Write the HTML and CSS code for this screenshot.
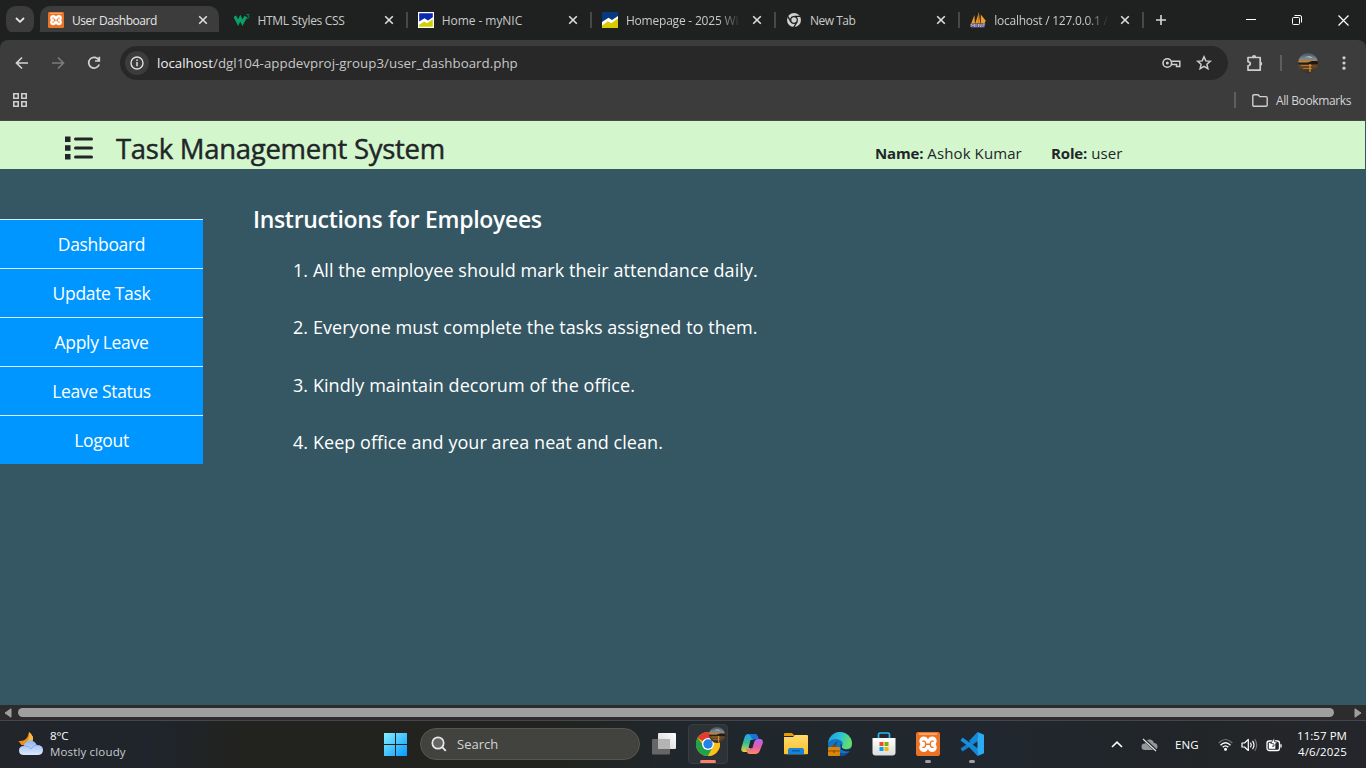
FILE: index.html
```html
<!DOCTYPE html>
<html lang="en">
<head>
<meta charset="utf-8">
<title>User Dashboard</title>
<link rel="stylesheet" href="styles.css">
</head>
<body>
<svg class="defs" width="0" height="0" aria-hidden="true">
  <defs>
    <symbol id="close" viewBox="0 0 10 10"><path d="M1.200 1.200l7.600 7.600M8.800 1.200L1.200 8.800" fill="none" stroke="currentColor" stroke-width="1.600"/></symbol>
    <symbol id="xampp" viewBox="0 0 24 24">
      <rect width="24" height="24" rx="2" fill="#ea7325"/>
      <path d="M3 2h18" stroke="#f9b98a" stroke-width="1.400"/>
      <g fill="#fff"><circle cx="7.800" cy="9" r="4.500"/><circle cx="16.200" cy="9" r="4.500"/><circle cx="7.800" cy="15.500" r="4.500"/><circle cx="16.200" cy="15.500" r="4.500"/><path d="M6 9.500h12v5.500H6z"/></g>
      <path d="M6.800 9.200H8q1.600 0 1.600 3.050T8 15.300H6.800M17.200 9.200H16q-1.600 0-1.600 3.050T16 15.300h1.200M9.800 12.250h4.400" fill="none" stroke="#ea7325" stroke-width="1.300" stroke-linecap="round"/>
    </symbol>
    <linearGradient id="sunset" x1="0" y1="0" x2="0" y2="1">
      <stop offset="0" stop-color="#3f5468"/><stop offset=".3" stop-color="#81868a"/><stop offset=".43" stop-color="#ac8241"/>
      <stop offset=".52" stop-color="#211c19"/><stop offset=".62" stop-color="#6e4923"/><stop offset="1" stop-color="#31302e"/>
    </linearGradient>
    <symbol id="avatar" viewBox="0 0 20 20">
      <circle cx="10" cy="10" r="10" fill="url(#sunset)"/>
      <path d="M6 4.500q3-2 6-1.500l3 1.500q-3 1-4 .3t-5-.3z" fill="#a2a9ac"/>
      <path d="M1 8.500h11" stroke="#c48431" stroke-width="1"/>
      <path d="M10 9.500l4-1.500h5.800v3H10z" fill="#1c1917"/>
      <path d="M3 12.500h11M5 15.500h9" stroke="#b87b30" stroke-width=".9"/>
      <path d="M12 11v8" stroke="#e0963a" stroke-width="1.200"/>
    </symbol>
    <linearGradient id="win" x1="0" y1="0" x2="1" y2="1"><stop offset="0" stop-color="#84f0ff"/><stop offset="1" stop-color="#0798ff"/></linearGradient>
    <linearGradient id="viewFront" x1="0" y1="1" x2="1" y2="0"><stop offset="0" stop-color="#d0d0d0"/><stop offset="1" stop-color="#fff"/></linearGradient>
    <linearGradient id="copA" x1="0" y1="0" x2="0" y2="1"><stop offset="0" stop-color="#20a4f5"/><stop offset=".5" stop-color="#38bc93"/><stop offset="1" stop-color="#e7d33c"/></linearGradient>
    <linearGradient id="copB" x1="0" y1="0" x2="0" y2="1"><stop offset="0" stop-color="#ad6bf0"/><stop offset=".5" stop-color="#e35bb0"/><stop offset="1" stop-color="#ff8a5c"/></linearGradient>
    <linearGradient id="fold" x1="0" y1="0" x2="0" y2="1"><stop offset="0" stop-color="#ffdc6a"/><stop offset="1" stop-color="#fbbf2f"/></linearGradient>
    <linearGradient id="edge" x1="0" y1="0" x2="1" y2=".3"><stop offset="0" stop-color="#1c9be0"/><stop offset=".55" stop-color="#2dc3d4"/><stop offset="1" stop-color="#65df66"/></linearGradient>
    <linearGradient id="cloud" x1="0" y1="0" x2="0" y2="1"><stop offset="0" stop-color="#8eb4f5"/><stop offset="1" stop-color="#dce8fc"/></linearGradient>
    <linearGradient id="bag" x1="0" y1="0" x2="0" y2="1"><stop offset="0" stop-color="#fff"/><stop offset="1" stop-color="#dcdcdc"/></linearGradient>
  </defs>
</svg>

<div class="tabstrip">
  <button class="tab-search"><svg width="10" height="6" viewBox="0 0 10 6"><path d="M1 1l4 3.800L9 1" fill="none" stroke="#e6e6e6" stroke-width="1.800"/></svg></button>
  <div class="tab tab-active">
    <svg class="favicon" viewBox="0 0 24 24"><use href="#xampp"/></svg>
    <span class="tab-title t-user">User Dashboard</span>
    <svg class="tab-close"><use href="#close"/></svg>
  </div>
  <div class="tab">
    <svg class="favicon" viewBox="0 0 16 16"><path d="M.8 4.200l3.300 6.500 2.200-4.500 2.200 4.500 3.300-6.200" fill="none" stroke="#08a067" stroke-width="3"/><path d="M12.500 2.500H15l-1.300 1.600q1.500 0 1.400 1.200T12.600 6.500" fill="none" stroke="#08805a" stroke-width="1"/></svg>
    <span class="tab-title t-html">HTML Styles CSS</span>
    <svg class="tab-close"><use href="#close"/></svg>
  </div>
  <div class="tab">
    <svg class="favicon" viewBox="0 0 16 16"><path d="M0 0h16v16H0z" fill="#fff"/><path d="M1.200 1.200h13.600v4L10 8.500 6.500 6.300 1.200 9.500z" fill="#0829b3"/><path d="M1.200 14.800v-2l5-3.300L9 11.300l5.800-4v7.500z" fill="#d0d000"/></svg>
    <span class="tab-title t-nic">Home - myNIC</span>
    <svg class="tab-close"><use href="#close"/></svg>
  </div>
  <div class="tab">
    <svg class="favicon" viewBox="0 0 16 16"><path d="M0 0h16v16H0z" fill="#fff"/><path d="M0 0h16v4L10 8 6.500 5.800 0 10z" fill="#07397f"/><path d="M0 16v-2.500l6-4.200 3.200 2L16 6.500V16z" fill="#dacb00"/></svg>
    <span class="tab-title t-homepage">Homepage - 2025 Wi</span>
    <svg class="tab-close"><use href="#close"/></svg>
  </div>
  <div class="tab">
    <svg class="favicon" viewBox="0 0 16 16"><circle cx="8" cy="8" r="7" fill="#d0d1d0"/><circle cx="8" cy="8" r="3.300" fill="#d0d1d0" stroke="#1f2120" stroke-width="1.300"/><path d="M8 4.400h6.700M4.900 9.800L1.600 4.200M11 9.900l-3.300 5.500" stroke="#1f2120" stroke-width="1.300"/></svg>
    <span class="tab-title t-new">New Tab</span>
    <svg class="tab-close"><use href="#close"/></svg>
  </div>
  <div class="tab">
    <svg class="favicon" viewBox="0 0 16 16"><path d="M1 12l3.400-9 .6 8.500zM5.200 11.500L8.800.5l1.500 11zM10.800 11.500V2.500l5 6.300-1.300 2.700z" fill="#f39a26"/><path d="M8.800.5L8.200 11.500" stroke="#9b5a18" stroke-width=".6"/><path d="M.5 11.500h15L14.500 15.500H1z" fill="#62628b"/><path d="M1 15v-3l2 2 1.500-2v3M6 12v3M8.500 15v-3l2.500 3v-3M13 15v-3h2" fill="none" stroke="#c3c3d8" stroke-width=".7"/></svg>
    <span class="tab-title t-local">localhost / 127.0.0.1 /</span>
    <svg class="tab-close"><use href="#close"/></svg>
  </div>
  <svg class="new-tab" width="12" height="12" viewBox="0 0 12 12"><path d="M6 1v10M1 6h10" stroke="#d6d6d6" stroke-width="1.600"/></svg>
  <div class="window-controls">
    <svg width="10" height="10" viewBox="0 0 10 10"><path d="M0 4.500h10" stroke="#fff"/></svg>
    <svg width="10" height="10" viewBox="0 0 10 10"><rect x=".5" y="2.500" width="7" height="7" rx="1" fill="none" stroke="#fff"/><path d="M2.500.5H8q1.500 0 1.500 1.500v5.500" fill="none" stroke="#fff"/></svg>
    <svg width="11" height="11" viewBox="0 0 11 11"><path d="M.5.5l10 10M10.500.5l-10 10" stroke="#fff" stroke-width="1.200"/></svg>
  </div>
</div>

<div class="browser-chrome">
  <div class="toolbar">
    <svg class="nav" viewBox="0 0 16 16"><path d="M14 8H3M8 2.500L2.500 8 8 13.500" fill="none" stroke="#d3d3d3" stroke-width="1.700"/></svg>
    <svg class="nav" viewBox="0 0 16 16"><path d="M2 8h11M8 2.500L13.500 8 8 13.500" fill="none" stroke="#7b7b7b" stroke-width="1.700"/></svg>
    <svg class="nav" viewBox="0 0 16 16"><path d="M12.800 5A5.400 5.400 0 1 0 13.200 9.500M13.300 1.800V6H9" fill="none" stroke="#d3d3d3" stroke-width="1.700"/></svg>
    <div class="omnibox">
      <span class="site-info"><svg width="14" height="14" viewBox="0 0 14 14"><circle cx="7" cy="7" r="6" fill="none" stroke="#dedede" stroke-width="1.400"/><path d="M7 6v4.200M7 3.600v1.500" stroke="#dedede" stroke-width="1.500"/></svg></span>
      <span class="url"><span class="host">localhost</span>/dgl104-appdevproj-group3/user_dashboard.php</span>
      <svg class="key" width="19" height="12" viewBox="0 0 19 12"><circle cx="5.300" cy="6" r="4.300" fill="none" stroke="#cecece" stroke-width="1.600"/><circle cx="5.300" cy="6" r="1.500" fill="#cecece"/><path d="M9.500 4.200h8.300v5.300h-3.300V7.600H9.500" fill="none" stroke="#cecece" stroke-width="1.500"/></svg>
      <svg width="16" height="16" viewBox="0 0 16 16"><path d="M8 1.800l1.800 4.100 4.500.4-3.400 3 1 4.400L8 11.300l-3.900 2.400 1-4.400-3.400-3 4.500-.4z" fill="none" stroke="#cecece" stroke-width="1.500"/></svg>
    </div>
    <svg class="ext" width="18" height="18" viewBox="0 0 18 18"><path d="M2 3.500h12.200v12.700H2v-4.400q2.300-.4 2.300-2T2 7.700z" fill="none" stroke="#cecece" stroke-width="1.700" stroke-linejoin="round"/><path d="M6 3a2.100 2.100 0 0 1 4.200 0zM14.500 7.500a2.200 2.200 0 0 1 0 4.300z" fill="#cecece"/></svg>
    <span class="bar"></span>
    <svg class="profile" width="20" height="20" viewBox="0 0 20 20"><use href="#avatar"/></svg>
    <svg class="kebab" width="4" height="14" viewBox="0 0 4 14"><g fill="#cecece"><circle cx="2" cy="1.800" r="1.600"/><circle cx="2" cy="7" r="1.600"/><circle cx="2" cy="12.200" r="1.600"/></g></svg>
  </div>
  <div class="bookmarks">
    <svg width="14" height="14" viewBox="0 0 14 14"><path d="M.8.8h4.400v4.400H.8zM8.800.8h4.400v4.400H8.800zM.8 8.800h4.400v4.400H.8zM8.800 8.800h4.400v4.400H8.800z" fill="none" stroke="#cecece" stroke-width="1.600"/></svg>
    <span class="bar bar-right"></span>
    <svg class="folder" width="16" height="13" viewBox="0 0 16 13"><path d="M.8 2q0-1.200 1.200-1.200h4L7.800 2.600H14q1.200 0 1.200 1.200v7.200q0 1.200-1.200 1.200H2Q.8 12.200.8 11z" fill="none" stroke="#cecece" stroke-width="1.400"/></svg>
    <span class="all-bookmarks">All Bookmarks</span>
  </div>
</div>

<header class="app-header">
  <svg class="menu-icon" width="28" height="24" viewBox="0 0 28 24"><path d="M0 .5h5.500V6H0zM0 9.300h5.500v5.500H0zM0 18h5.500v5.500H0z" fill="#212529"/><path d="M10.500 3h16M10.500 12h16M10.500 21h16" stroke="#212529" stroke-width="3" stroke-linecap="round"/></svg>
  <h3 class="brand">Task Management System</h3>
  <span class="who who-name"><b>Name:</b> Ashok Kumar</span>
  <span class="who who-role"><b>Role:</b> user</span>
</header>
<main class="app-body">
  <nav class="sidebar">
    <a>Dashboard</a><a>Update Task</a><a>Apply Leave</a><a>Leave Status</a><a>Logout</a>
  </nav>
  <section class="instructions">
    <h4>Instructions for Employees</h4>
    <ol>
      <li>1. All the employee should mark their attendance daily.</li>
      <li>2. Everyone must complete the tasks assigned to them.</li>
      <li>3. Kindly maintain decorum of the office.</li>
      <li>4. Keep office and your area neat and clean.</li>
    </ol>
  </section>
</main>
<div class="scrollbar">
  <svg width="8" height="10" viewBox="0 0 8 10"><path d="M7 .8v8.400L1 5z" fill="#9f9f9f" stroke="#9f9f9f" stroke-linejoin="round"/></svg>
  <span class="thumb"></span>
  <svg width="8" height="10" viewBox="0 0 8 10"><path d="M1 .8v8.400L7 5z" fill="#9f9f9f" stroke="#9f9f9f" stroke-linejoin="round"/></svg>
</div>

<footer class="taskbar">
  <div class="weather">
    <svg width="26" height="26" viewBox="0 0 26 26"><path d="M11 1q5.500 4.500 3.500 9l-4 5-7-1-3-4q5 .5 7.500-2T11 1z" fill="#f08e1a"/><path d="M11 1q5.500 4.500 3.500 9L9 11q3-4 2-10z" fill="#f8bc3f"/><path d="M6 24q-5 0-5-4.500T6 15q1-5.500 6-5.500 5 0 6.500 4.500 6.500 0 6.500 5T19.500 24z" fill="url(#cloud)"/><path d="M7 15q4 0 6 3 2-4 6-4" fill="none" stroke="#7fa5e8" stroke-width=".8"/></svg>
    <div class="weather-text"><span class="temp">8°C</span><span class="sky">Mostly cloudy</span></div>
  </div>
  <svg class="start" width="23" height="23" viewBox="0 0 23 23"><path d="M0 0h11v11H0zM12 0h11v11H12zM0 12h11v11H0zM12 12h11v11H12z" fill="url(#win)"/></svg>
  <div class="search">
    <svg width="16" height="16" viewBox="0 0 16 16"><circle cx="7" cy="7" r="5.700" fill="#666" stroke="#e8e8e8" stroke-width="1.700"/><path d="M11.200 11.200l3.600 3.600" stroke="#e8e8e8" stroke-width="1.900"/></svg>
    <span>Search</span>
  </div>
  <div class="apps">
    <div class="app"><svg width="24" height="24" viewBox="0 0 24 24"><rect x="6" y="1" width="18" height="16" rx="1" fill="url(#viewFront)"/><rect y="7" width="18" height="15.500" rx="1" fill="#666"/><path d="M6 7h12v10H6z" fill="#b4b4b4"/></svg></div>
    <div class="app app-current">
      <svg width="24" height="24" viewBox="0 0 24 24"><circle cx="12" cy="12" r="12" fill="#fbc116"/><path d="M12 12L1.600 6A12 12 0 0 1 22.400 6z" fill="#e33b2e"/><path d="M12 12H6.500L1.600 6A12 12 0 0 0 12 24l5-9z" fill="#21a24a"/><path d="M12 6h10.400A12 12 0 0 1 12 24l5-9z" fill="#fbc116"/><circle cx="12" cy="12" r="6" fill="#fff"/><circle cx="12" cy="12" r="4.700" fill="#2383ea"/></svg>
      <svg class="badge" width="16" height="16" viewBox="0 0 20 20"><use href="#avatar"/></svg>
      <i class="run run-current"></i>
    </div>
    <div class="app"><svg width="24" height="24" viewBox="0 0 24 24"><path d="M8 2h7q2 0 2.800 2.500L18.500 7H15q-2 0-2.700 2.300L10 17.500Q9 20 6.500 20H4.200Q.5 20 1.500 15.500l3-10Q5.500 2 8 2z" fill="url(#copA)"/><path d="M8 2h7q2 0 2.800 2.500L18.500 7H15L12 8q-1-5-4-6z" fill="#1873df"/><path d="M16 22H9.500q-2 0-2.800-2.500L6 17h3.500q2 0 2.700-2.300l2.300-5.500Q15.500 7 18 7h2q3.700 0 2.700 4.500l-3 7.500Q18.500 22 16 22z" fill="url(#copB)"/><path d="M10.500 8h4L12.500 16h-4z" fill="#20272e"/></svg></div>
    <div class="app"><svg width="24" height="24" viewBox="0 0 24 24"><path d="M0 2q0-1 1-1h7l3 3H0z" fill="#e29b0d"/><path d="M0 5h9l2-2h12q1 0 1 1v17.500q0 .8-1 .8H1q-1 0-1-1z" fill="url(#fold)"/><path d="M4 22.300V18q0-2 2-2h12q2 0 2 2v4.300z" fill="#1685d8"/><path d="M8 18.800h8" stroke="#075da6" stroke-width="1.400"/></svg></div>
    <div class="app"><svg width="24" height="24" viewBox="0 0 24 24"><circle cx="12" cy="12" r="12" fill="#1176c9"/><path d="M.2 10A12 12 0 0 1 24 11q0 6-6 6-5 0-4-3 2-4-2-6Q6 5 .2 10z" fill="url(#edge)"/><path d="M10 9q-4 5 0 10 4 4 11 1-5 6-12 3.500Q5 21 5 16t5-7z" fill="#164b94"/><path d="M12.500 11.500q2 1.500 1 4 3.500 4 10.500.5v2.500q-6 2.500-11-1z" fill="#20272e"/><path d="M4.500 15v-1.200h3V15" fill="none" stroke="#8e4e08" stroke-width="1.400"/><rect y="15" width="12" height="9" rx="1" fill="#d8870b"/><path d="M0 19h12M6 18v3" stroke="#8e4e08" stroke-width="1.200"/></svg></div>
    <div class="app"><svg width="24" height="24" viewBox="0 0 24 24"><path d="M6.500 6V2.500q0-1.500 1.500-1.500h8q1.500 0 1.500 1.500V6" fill="none" stroke="#31b2f3" stroke-width="1.700"/><path d="M.5 6h23v14.500q0 3-3 3h-17q-3 0-3-3z" fill="url(#bag)"/><path d="M7.500 10h4v4h-4z" fill="#ef4c24"/><path d="M12.500 10h4v4h-4z" fill="#77b300"/><path d="M7.500 15h4v4h-4z" fill="#0a9de9"/><path d="M12.500 15h4v4h-4z" fill="#f6b600"/></svg></div>
    <div class="app"><svg width="24" height="24" viewBox="0 0 24 24"><use href="#xampp"/></svg><i class="run"></i></div>
    <div class="app"><svg width="24" height="24" viewBox="0 0 24 24"><path d="M18 7L1.500 18" stroke="#1680c9" stroke-width="3.600"/><path d="M1.500 7L18 19" stroke="#168fe0" stroke-width="3.600"/><path d="M17.500 0v7.500L12 12l-3-3zM17.500 24v-7.500L12 12l-3 3z" fill="#128ad8"/><path d="M17.500 0L24 2.800v18.400L17.500 24z" fill="#2cabf5"/></svg><i class="run"></i></div>
  </div>
  <div class="tray">
    <svg class="chev" width="12" height="7" viewBox="0 0 12 7"><path d="M1 6l5-4.800L11 6" fill="none" stroke="#fff" stroke-width="1.600"/></svg>
    <svg class="onedrive" width="17" height="14" viewBox="0 0 17 14"><path d="M4 12Q.5 12 .5 8.700T4 5.500Q5 1.500 8.500 1.500T13 5q3.500 0 3.500 3.500T13 12z" fill="#949698"/><path d="M2.500 1l13 12" stroke="#222629" stroke-width="3"/><path d="M2 1l13 12" stroke="#e8e8e8" stroke-width="1.100"/></svg>
    <span class="lang">ENG</span>
    <svg class="wifi" width="15" height="13" viewBox="0 0 15 13"><path d="M.7 5Q7.500-2 14.300 5" fill="none" stroke="#77797b" stroke-width="1.200"/><path d="M2.500 7.200q5-5 10 0M4.700 9.300q2.800-2.800 5.600 0" fill="none" stroke="#fff" stroke-width="1.400"/><circle cx="7.500" cy="11.200" r="1.500" fill="#fff"/></svg>
    <svg class="vol" width="17" height="14" viewBox="0 0 17 14"><path d="M1 5h2.500L7.300 1.500v11L3.500 9H1z" fill="none" stroke="#fff" stroke-width="1.200" stroke-linejoin="round"/><path d="M9.500 4.700q1.500 2.300 0 4.600M11.500 2.800q3 4.200 0 8.400" fill="none" stroke="#fff" stroke-width="1.200"/><path d="M13.700 1.200q4 5.800 0 11.600" fill="none" stroke="#717375" stroke-width="1.200"/></svg>
    <svg class="batt" width="16" height="14" viewBox="0 0 16 14"><rect x="1" y="3" width="12.500" height="9.500" rx="2.200" fill="none" stroke="#fff" stroke-width="1.300"/><path d="M2.800 4.800h6.500v6H2.800z" fill="#fff"/><path d="M15 6.200v3.200" stroke="#fff" stroke-width="1.300"/><path d="M8 0L4.800 5.500h2.700L6.800 9l4.500-5H8.700z" fill="#fff" stroke="#222629" stroke-width=".7"/></svg>
    <div class="clock"><span class="time">11:57 PM</span><span class="date">4/6/2025</span></div>
  </div>
</footer>
</body>
</html>
```
FILE: styles.css
```css
* { box-sizing: border-box; }
body {
  margin: 0; width: 1366px; height: 768px; overflow: hidden;
  display: flex; flex-direction: column;
  font-family: "Open Sans", "Noto Sans", sans-serif; font-size: 12px; color: #e3e3e3;
  background: #355763; white-space: nowrap;
}
svg { flex: none; display: block; }
.defs { position: absolute; }

.tabstrip { display: flex; height: 40px; background: #1f2120; flex: none; }
.tab-search { width: 28px; height: 28px; margin: 6px 6px 0; border: 0; padding: 0; border-radius: 10px; background: #3c3c3c; display: flex; align-items: center; justify-content: center; }
.tab { position: relative; width: 184.200px; height: 40px; padding: 0 15px 0 9px; display: flex; align-items: center; gap: 8px; color: #c9caca; flex: none; }
.tab + .tab:not(.tab-active)::after { content: ""; position: absolute; right: 1px; top: 12px; width: 2px; height: 16px; background: #474948; }
.tab-active { width: 179px; margin-right: 5.500px; padding: 0 11px 0 8px; height: 34px; margin-top: 6px; padding-bottom: 6px; background: #3c3c3c; border-radius: 10px 10px 0 0; color: #e6e6e6; }
.tab-active::before, .tab-active::after { content: ""; position: absolute; bottom: 0; width: 10px; height: 10px; }
.tab-active::before { left: -10px; background: radial-gradient(circle at 0 0, transparent 9.500px, #3c3c3c 10px); }
.tab-active::after { right: -10px; background: radial-gradient(circle at 100% 0, transparent 9.500px, #3c3c3c 10px); }
.favicon { width: 16px; height: 16px; }
.tab-title { flex: 1; min-width: 0; overflow: hidden; }
.tab-close { width: 10px; height: 10px; color: #dedede; }
.t-user { letter-spacing: -.45px; }
.t-html { letter-spacing: -.32px; }
.t-nic { letter-spacing: -.05px; }
.t-new { letter-spacing: -.5px; }
.t-homepage, .t-local { letter-spacing: -.2px; margin-right: 3px; overflow: visible; -webkit-mask-image: linear-gradient(90deg, #000 80%, transparent); mask-image: linear-gradient(90deg, #000 80%, transparent); }
.t-local { letter-spacing: -.25px; }
.new-tab { margin: 14px 0 0 10px; }
.window-controls { margin: 15px 17px 0 auto; display: flex; gap: 36px; }

.browser-chrome { height: 81px; flex: none; background: #3c3c3c; border-radius: 8px 8px 0 0; border-bottom: 1px solid #474747; box-shadow: 0 -8px 0 #1f2120; clip-path: inset(-8px 0 0); }
.toolbar { height: 46px; display: flex; align-items: center; padding: 0 20px 0 14px; }
.nav { width: 16px; height: 16px; margin-right: 20px; }
.nav:nth-child(3) { margin-right: 18px; }
.omnibox { width: 1108px; height: 34px; border-radius: 17px; background: #282828; display: flex; align-items: center; padding: 0 16px 0 5px; }
.site-info { width: 24px; height: 24px; border-radius: 50%; background: #3c3c3c; display: flex; align-items: center; justify-content: center; margin-right: 8px; }
.url { flex: 1; font-size: 13.300px; letter-spacing: .03px; color: #c7c7c7; }
.host { color: #f0f0f0; }
.key { margin-right: 15px; }
.ext { margin-left: 18px; }
.bar { width: 2px; height: 16px; background: #5e5e5e; margin-left: 16px; }
.profile { margin-left: 16px; }
.kebab { margin-left: 24px; }
.bookmarks { height: 28px; display: flex; align-items: center; padding: 0 15px 0 13px; }
.bar-right { margin-left: auto; }
.folder { margin: 0 8px 0 16px; }
.all-bookmarks { color: #d5d5d5; letter-spacing: -.38px; width: 75px; }

.app-header { height: 48px; flex: none; width: 1365px; background: #d4f6cd; color: #212529; display: flex; padding-left: 65px; }
.menu-icon { margin-top: 15px; }
.brand { margin: 9px 0 0 23px; font-size: 27.500px; line-height: 38px; font-weight: 500; -webkit-text-stroke: .45px #212529; letter-spacing: -.28px; width: 759px; }
.who { font-size: 15px; line-height: 24px; margin-top: 20px; letter-spacing: .1px; }
.who b { letter-spacing: -.15px; }
.who-name { width: 176px; }
.app-body { flex: 1; display: flex; background: #355763; color: #fff; }
.sidebar { width: 203px; margin-top: 50px; }
.sidebar a { display: block; height: 49px; border-top: 1px solid #dceeff; background: #0096ff; text-align: center; font-size: 17.500px; line-height: 49px; letter-spacing: -.33px; }
.instructions { padding: 34px 0 0 50px; }
h4 { margin: 0; font-size: 23px; line-height: 32px; font-weight: 600; letter-spacing: -.32px; }
ol { list-style: none; margin: 19px 0 0; padding: 0 0 0 40px; }
li { font-size: 18px; line-height: 33px; height: 57.300px; letter-spacing: .06px; }

.scrollbar { height: 15px; flex: none; background: #2c2c2c; display: flex; align-items: center; padding: 0 4px; justify-content: space-between; }
.thumb { width: 1316px; height: 9px; border-radius: 5px; background: #9f9f9f; margin: 0 auto 0 6px; }

.taskbar { height: 48px; flex: none; border-top: 1px solid #43464a; background: linear-gradient(90deg, #22252a 0, #1f252c 150px, #22231f 240px, #22231e 550px, #20272c 680px, #20272e 1000px, #222528 1200px, #25262b); display: flex; }
.weather { width: 383px; display: flex; padding: 10px 0 0 18px; }
.weather-text { display: flex; flex-direction: column; margin: -3px 0 0 6px; line-height: 16px; font-size: 11.500px; }
.temp { color: #fff; letter-spacing: -.1px; }
.sky { color: #c9cbcd; letter-spacing: .16px; }
.start { margin: 12px 0 0 1px; }
.search { width: 220px; height: 32px; margin: 7px 0 0 13px; padding-left: 10px; border-radius: 16px; border: 1px solid #55564f; background: #42433f; display: flex; align-items: center; gap: 10px; font-size: 13px; color: #d4d4d2; }
.apps { display: flex; gap: 4px; margin: 3px 0 0 4px; }
.app { position: relative; width: 40px; height: 40px; display: flex; align-items: center; justify-content: center; border-radius: 4px; }
.app-current { background: #2d3237; border: 1px solid #383d41; }
.badge { position: absolute; left: 20px; top: 2px; }
.run { position: absolute; left: 17px; bottom: 1px; width: 6px; height: 3px; border-radius: 2px; background: #9da1a4; }
.run-current { left: 11px; bottom: 0; width: 16px; background: #fb8069; }
.tray { margin-left: auto; display: flex; align-items: center; padding-right: 19px; color: #fff; }
.onedrive { margin-left: 18px; }
.lang { width: 26px; margin-left: 17px; font-size: 11.500px; letter-spacing: .1px; }
.wifi { margin-left: 17px; }
.vol { margin-left: 8px; }
.batt { margin-left: 8px; }
.clock { display: flex; flex-direction: column; width: 51px; margin: -2px 0 0 14px; text-align: right; font-size: 11.500px; line-height: 16px; letter-spacing: .05px; align-items: flex-end; }
.date { letter-spacing: .15px; }
```
